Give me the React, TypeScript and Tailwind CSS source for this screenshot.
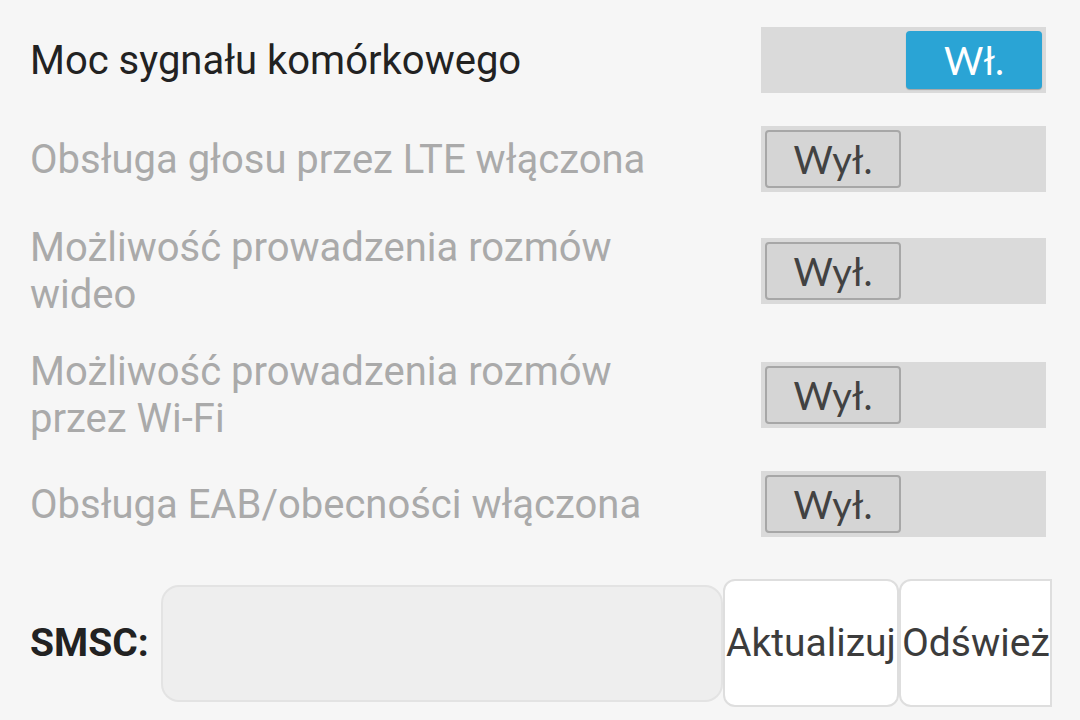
import React from "react";

interface ToggleRowProps {
  label: string;
  on?: boolean;
  disabled?: boolean;
  className?: string;
}

const ToggleRow: React.FC<ToggleRowProps> = ({ label, on, disabled, className }) => {
  return (
    <div className={`flex items-center pl-[30px] pr-[34px] ${className ?? ""}`}>
      <div
        className={`w-[630px] text-[40px] leading-[47px] ${
          disabled ? "text-[#aaaaaa]" : "text-[#222222]"
        }`}
      >
        {label}
      </div>
      <div className="ml-auto flex h-[66px] w-[285px] items-center bg-[#dadada] px-[4px]">
        {on ? (
          <div className="ml-auto flex h-[58px] w-[136px] items-center justify-center rounded-[4px] bg-[#2aa4d5] shadow-[0_1px_1px_rgba(0,0,0,0.25)] font-['Lato',sans-serif] text-[38px] text-white">
            Wł.
          </div>
        ) : (
          <div className="flex h-[58px] w-[136px] items-center justify-center rounded-[4px] border-2 border-[#a7a7a7] bg-[#d5d5d5] font-['Lato',sans-serif] text-[38px] text-[#424242]">
            Wył.
          </div>
        )}
      </div>
    </div>
  );
};

export default function App() {
  return (
    <div className="h-[720px] w-[1080px] overflow-hidden bg-[#f6f6f6] pt-[27px] font-['Roboto',sans-serif]">
      <ToggleRow label="Moc sygnału komórkowego" on />
      <ToggleRow label="Obsługa głosu przez LTE włączona" disabled className="mt-[33px]" />
      <ToggleRow
        label="Możliwość prowadzenia rozmów wideo"
        disabled
        className="mt-[32px]"
      />
      <ToggleRow
        label="Możliwość prowadzenia rozmów przez Wi-Fi"
        disabled
        className="mt-[30px]"
      />
      <ToggleRow label="Obsługa EAB/obecności włączona" disabled className="mt-[29px]" />

      <div className="mt-[42px] flex items-center pl-[30px]">
        <div className="w-[131px] text-[39px] font-bold text-[#222222]">SMSC:</div>
        <div className="relative z-10 h-[117px] w-[562px] rounded-[18px] border-2 border-[#e3e3e3] bg-[#eeeeee]" />
        <button className="flex h-[128px] w-[176px] items-center justify-center rounded-[12px] border-2 border-[#dedede] bg-white text-[39px] text-[#3c3c3c]">
          Aktualizuj
        </button>
        <button className="flex h-[128px] w-[153px] items-center justify-start overflow-hidden whitespace-nowrap rounded-l-[12px] border-2 border-[#dedede] bg-white pl-[1px] text-[39px] text-[#3c3c3c]">
          Odśwież
        </button>
      </div>
    </div>
  );
}
